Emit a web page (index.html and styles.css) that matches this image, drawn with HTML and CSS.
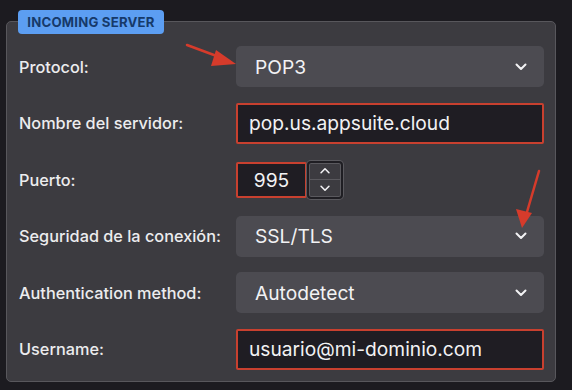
FILE: index.html
```html
<!DOCTYPE html>
<html>
<head>
<meta charset="utf-8">
<link rel="stylesheet" href="styles.css">
</head>
<body>
<div class="page">
  <div class="badge">INCOMING SERVER</div>
  <div class="panel">
    <div class="row">
      <div class="label">Protocol:</div>
      <div class="select"><span>POP3</span><svg class="chev" viewBox="0 0 12 8" width="12" height="8"><path d="M1.5 1.5 L6 6 L10.5 1.5" fill="none" stroke="#f2f2f4" stroke-width="2" stroke-linecap="round" stroke-linejoin="round"/></svg></div>
    </div>
    <div class="row">
      <div class="label">Nombre del servidor:</div>
      <div class="input">pop.us.appsuite.cloud</div>
    </div>
    <div class="row">
      <div class="label">Puerto:</div>
      <div class="port">
        <div class="input num">995</div>
        <div class="stepper">
          <div class="step"><svg viewBox="0 0 12 8" width="12" height="7"><path d="M1.5 6.5 L6 2 L10.5 6.5" fill="none" stroke="#f2f2f4" stroke-width="1.8" stroke-linecap="round" stroke-linejoin="round"/></svg></div>
          <div class="step"><svg viewBox="0 0 12 8" width="12" height="7"><path d="M1.5 1.5 L6 6 L10.5 1.5" fill="none" stroke="#f2f2f4" stroke-width="1.8" stroke-linecap="round" stroke-linejoin="round"/></svg></div>
        </div>
      </div>
    </div>
    <div class="row">
      <div class="label">Seguridad de la conexión:</div>
      <div class="select"><span>SSL/TLS</span><svg class="chev" viewBox="0 0 12 8" width="12" height="8"><path d="M1.5 1.5 L6 6 L10.5 1.5" fill="none" stroke="#f2f2f4" stroke-width="2" stroke-linecap="round" stroke-linejoin="round"/></svg></div>
    </div>
    <div class="row">
      <div class="label">Authentication method:</div>
      <div class="select"><span>Autodetect</span><svg class="chev" viewBox="0 0 12 8" width="12" height="8"><path d="M1.5 1.5 L6 6 L10.5 1.5" fill="none" stroke="#f2f2f4" stroke-width="2" stroke-linecap="round" stroke-linejoin="round"/></svg></div>
    </div>
    <div class="row">
      <div class="label">Username:</div>
      <div class="input">usuario@mi-dominio.com</div>
    </div>
  </div>
  <svg class="arrows" viewBox="0 0 572 390" width="572" height="390">
    <line x1="187" y1="45" x2="222" y2="58" stroke="#d63b2b" stroke-width="2.5" stroke-linecap="round"/>
    <polygon points="236,64 216,50 211,66" fill="#d63b2b"/>
    <line x1="539" y1="171" x2="527" y2="212" stroke="#d63b2b" stroke-width="2.5" stroke-linecap="round"/>
    <polygon points="522,228 516,209 532,213" fill="#d63b2b"/>
  </svg>
</div>
</body>
</html>
```
FILE: styles.css
```css
html, body {
  margin: 0;
  padding: 0;
  background: #1c1b20;
}
.page {
  position: relative;
  width: 572px;
  height: 390px;
  overflow: hidden;
  font-family: Inter, "Liberation Sans", sans-serif;
  padding: 21px 16px 0 6px;
  box-sizing: border-box;
}
.badge {
  position: absolute;
  left: 18px;
  top: 10px;
  width: 146px;
  height: 24px;
  box-sizing: border-box;
  background: #5c9ef2;
  color: #163a6a;
  border-radius: 4px;
  font-size: 13.2px;
  font-weight: 700;
  letter-spacing: 0.2px;
  display: flex;
  align-items: center;
  justify-content: center;
  z-index: 2;
}
.panel {
  width: 550px;
  height: 361px;
  box-sizing: border-box;
  background: #3c3b40;
  border: 1px solid #58575c;
  border-radius: 5px;
  padding: 24px 11px 0 12px;
  display: flex;
  flex-direction: column;
  gap: 15.6px;
}
.row {
  display: flex;
  align-items: center;
  height: 41px;
}
.label {
  width: 217px;
  color: #ececee;
  font-size: 16.3px;
  font-weight: 500;
  flex-shrink: 0;
}
.select {
  flex: 1;
  height: 41px;
  box-sizing: border-box;
  background: #4c4b51;
  border-radius: 5px;
  display: flex;
  align-items: center;
  justify-content: space-between;
  padding: 0 17px 0 19px;
  color: #f2f2f4;
  font-size: 19.2px;
}
.input {
  flex: 1;
  height: 41px;
  box-sizing: border-box;
  background: #1f1d23;
  border: 2px solid #c8402f;
  border-radius: 2px;
  display: flex;
  align-items: center;
  padding: 0 11px;
  color: #f2f2f4;
  font-size: 19.2px;
}
.port {
  display: flex;
  align-items: center;
}
.input.num {
  flex: none;
  width: 71px;
  height: 36px;
  justify-content: center;
  padding: 0;
}
.stepper {
  width: 36px;
  height: 38px;
  box-sizing: border-box;
  border: 2px solid #1f1e23;
  border-radius: 4px;
  background: #3c3b40;
  display: flex;
  flex-direction: column;
  box-shadow: inset 0 0 0 1px #5a595e, 0 0 0 1px #5a595e;
}
.step {
  flex: 1;
  display: flex;
  align-items: center;
  justify-content: center;
}
.step + .step {
  border-top: 1px solid #5a595e;
}
.arrows {
  position: absolute;
  left: 0;
  top: 0;
  pointer-events: none;
  z-index: 3;
}
```
